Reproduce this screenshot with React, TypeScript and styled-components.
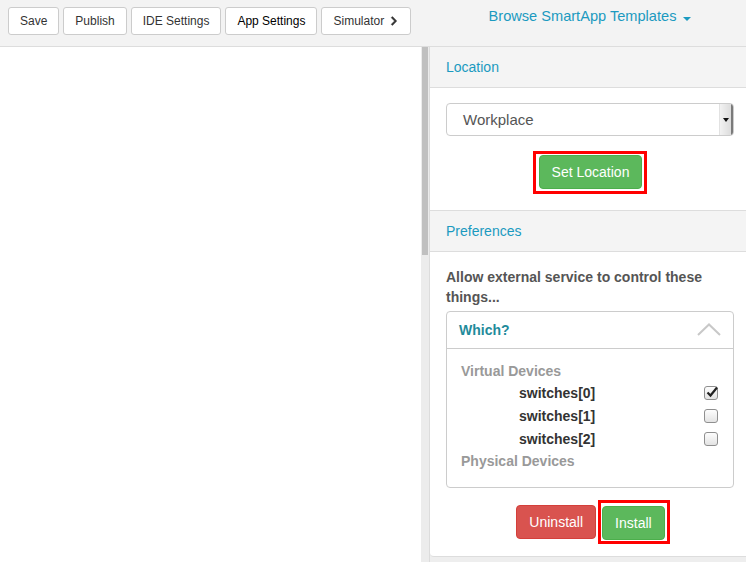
import React from 'react'
import styled, { createGlobalStyle } from 'styled-components'
import { FaChevronRight } from 'react-icons/fa'

const GlobalStyle = createGlobalStyle`
  html, body {
    margin: 0;
    padding: 0;
    background: #eeeeee;
    font-family: "Liberation Sans", Arial, sans-serif;
    overflow: hidden;
  }
`

const Page = styled.div`
  display: flex;
  width: 746px;
  height: 562px;
`

const LeftPane = styled.div`
  width: 430px;
  display: flex;
  flex-direction: column;
`

const Toolbar = styled.div`
  height: 47px;
  box-sizing: border-box;
  background: #f3f3f3;
  border-bottom: 1px solid #dddddd;
  display: flex;
  align-items: flex-start;
  gap: 4px;
  padding: 7px 0 0 8px;
`

const ToolButton = styled.button<{ active?: boolean }>`
  all: unset;
  box-sizing: border-box;
  height: 28px;
  padding: 0 11px;
  display: flex;
  align-items: center;
  gap: 5px;
  background: #fff;
  border: 1px solid #cccccc;
  border-radius: 3px;
  font-size: 12px;
  color: ${({ active }) => (active ? '#000' : '#333')};
  cursor: pointer;

  & svg {
    font-size: 10px;
    stroke: currentColor;
    stroke-width: 30;
  }
`

const EditorRow = styled.div`
  flex: 1;
  display: flex;
`

const Editor = styled.div`
  flex: 1;
  background: #fff;
`

const ScrollTrack = styled.div`
  width: 8px;
  background: #ececec;
  border-right: 1px solid #dcdcdc;
  display: flex;
  flex-direction: column;
`

const ScrollThumb = styled.div`
  height: 208px;
  margin: 0 1px;
  background: #c0c0c0;
`

const RightPane = styled.div`
  flex: 1;
  display: flex;
  flex-direction: column;
`

const TopHeader = styled.div`
  height: 47px;
  box-sizing: border-box;
  background: #f3f3f3;
  border-bottom: 1px solid #dddddd;
  display: flex;
  justify-content: center;
  padding: 8px 0 0 4px;
  font-size: 14.6px;
  color: #1b9ac0;
`

const Caret = styled.span`
  display: inline-block;
  margin-left: 7px;
  margin-top: 9px;
  width: 0;
  height: 0;
  border-left: 4px solid transparent;
  border-right: 4px solid transparent;
  border-top: 4px solid #1b9ac0;
`

const Card = styled.div`
  background: #fff;
  border-bottom: 1px solid #dddddd;
  border-bottom-left-radius: 4px;
  height: 510px;
  box-sizing: border-box;
`

const SectionHeading = styled.div`
  height: 41px;
  box-sizing: border-box;
  background: #f4f4f4;
  border-bottom: 1px solid #dddddd;
  padding: 12px 16px 0;
  font-size: 14px;
  color: #1b9ac0;
`

const SectionBody = styled.div<{ last?: boolean }>`
  padding: 15px 12px 16px 16px;
  border-bottom: ${({ last }) => (last ? 'none' : '1px solid #dddddd')};
  display: flex;
  flex-direction: column;
`

const SelectBox = styled.div`
  height: 33px;
  box-sizing: border-box;
  border: 1px solid #cccccc;
  border-radius: 4px;
  display: flex;
  align-items: center;
  justify-content: space-between;
  padding-left: 16px;
  font-size: 15px;
  color: #555;
  overflow: hidden;
`

const SelectArrow = styled.div`
  width: 11px;
  height: 100%;
  background: linear-gradient(to right, #f2f2f2, #dcdcdc);
  border-left: 1px solid #e2e2e2;
  border-right: 2px solid #7a7a7a;
  display: flex;
  align-items: center;
  justify-content: center;

  &::after {
    content: '';
    border-left: 3px solid transparent;
    border-right: 3px solid transparent;
    border-top: 4px solid #111;
  }
`

const Actions = styled.div<{ top: number; shift?: number }>`
  display: flex;
  justify-content: center;
  align-items: center;
  gap: 2px;
  margin-top: ${({ top }) => top}px;
  padding-left: ${({ shift }) => shift ?? 0}px;
`

const Highlight = styled.span<{ pad: string }>`
  display: inline-flex;
  border: 3px solid #ff0000;
  padding: ${({ pad }) => pad};
`

const ActionButton = styled.button<{ danger?: boolean }>`
  all: unset;
  box-sizing: border-box;
  height: 34px;
  padding: 0 12px;
  display: inline-flex;
  align-items: center;
  border-radius: 4px;
  font-size: 14px;
  color: #fff;
  background: ${({ danger }) => (danger ? '#d9534f' : '#5cb85c')};
  border: 1px solid ${({ danger }) => (danger ? '#d43f3a' : '#4cae4c')};
  cursor: pointer;
`

const Prompt = styled.div`
  font-size: 14px;
  font-weight: bold;
  color: #555;
  line-height: 20px;
  margin-bottom: 4px;
  padding-right: 10px;
`

const Group = styled.div`
  border: 1px solid #cccccc;
  border-radius: 4px;
`

const GroupHeader = styled.div`
  height: 37px;
  box-sizing: border-box;
  border-bottom: 1px solid #cccccc;
  display: flex;
  align-items: center;
  justify-content: space-between;
  padding: 0 12px 1px 12px;
  font-size: 14px;
  font-weight: bold;
  color: #1f8b9b;
`

const GroupBody = styled.div`
  padding: 12px 15px 15px 14px;
  display: flex;
  flex-direction: column;
`

const Category = styled.div<{ lh: number }>`
  font-size: 14px;
  font-weight: bold;
  color: #999;
  line-height: ${({ lh }) => lh}px;
`

const DeviceRow = styled.div`
  display: flex;
  justify-content: space-between;
  align-items: center;
  height: 23px;
  padding-left: 58px;
  font-size: 14px;
  font-weight: bold;
  color: #333;
`

const CheckBox = styled.span`
  width: 14px;
  height: 14px;
  box-sizing: border-box;
  border: 1px solid #8f8f8f;
  border-radius: 3px;
  background: linear-gradient(#fdfdfd, #e3e3e3);
  position: relative;

  & svg {
    position: absolute;
    left: 0px;
    top: -2px;
  }
`

const devices = [
  { name: 'switches[0]', checked: true },
  { name: 'switches[1]', checked: false },
  { name: 'switches[2]', checked: false },
]

const App = () => {
  return (
    <>
      <GlobalStyle />
      <Page>
        <LeftPane>
          <Toolbar>
            <ToolButton>Save</ToolButton>
            <ToolButton>Publish</ToolButton>
            <ToolButton>IDE Settings</ToolButton>
            <ToolButton active>App Settings</ToolButton>
            <ToolButton>
              Simulator <FaChevronRight />
            </ToolButton>
          </Toolbar>
          <EditorRow>
            <Editor />
            <ScrollTrack>
              <ScrollThumb />
            </ScrollTrack>
          </EditorRow>
        </LeftPane>
        <RightPane>
          <TopHeader>
            Browse SmartApp Templates
            <Caret />
          </TopHeader>
          <Card>
            <SectionHeading>Location</SectionHeading>
            <SectionBody>
              <SelectBox>
                Workplace
                <SelectArrow />
              </SelectBox>
              <Actions top={15}>
                <Highlight pad="1px 2px 2px 3px">
                  <ActionButton>Set Location</ActionButton>
                </Highlight>
              </Actions>
            </SectionBody>
            <SectionHeading>Preferences</SectionHeading>
            <SectionBody last>
              <Prompt>Allow external service to control these things...</Prompt>
              <Group>
                <GroupHeader>
                  Which?
                  <svg width="24" height="13" viewBox="0 0 24 13">
                    <polyline points="1,12 12,1.5 23,12" fill="none" stroke="#c8c8c8" strokeWidth="2" />
                  </svg>
                </GroupHeader>
                <GroupBody>
                  <Category lh={20}>Virtual Devices</Category>
                  {devices.map((d) => (
                    <DeviceRow key={d.name}>
                      {d.name}
                      <CheckBox>
                        {d.checked && (
                          <svg width="14" height="14" viewBox="0 0 14 14">
                            <path d="M2.5 7.5 L5.5 10.5 L12 2.5" fill="none" stroke="#222" strokeWidth="2.2" />
                          </svg>
                        )}
                      </CheckBox>
                    </DeviceRow>
                  ))}
                  <Category lh={22}>Physical Devices</Category>
                </GroupBody>
              </Group>
              <Actions top={12} shift={6}>
                <ActionButton danger>Uninstall</ActionButton>
                <Highlight pad="3px 2px 1px 1px">
                  <ActionButton>Install</ActionButton>
                </Highlight>
              </Actions>
            </SectionBody>
          </Card>
        </RightPane>
      </Page>
    </>
  )
}

export default App
